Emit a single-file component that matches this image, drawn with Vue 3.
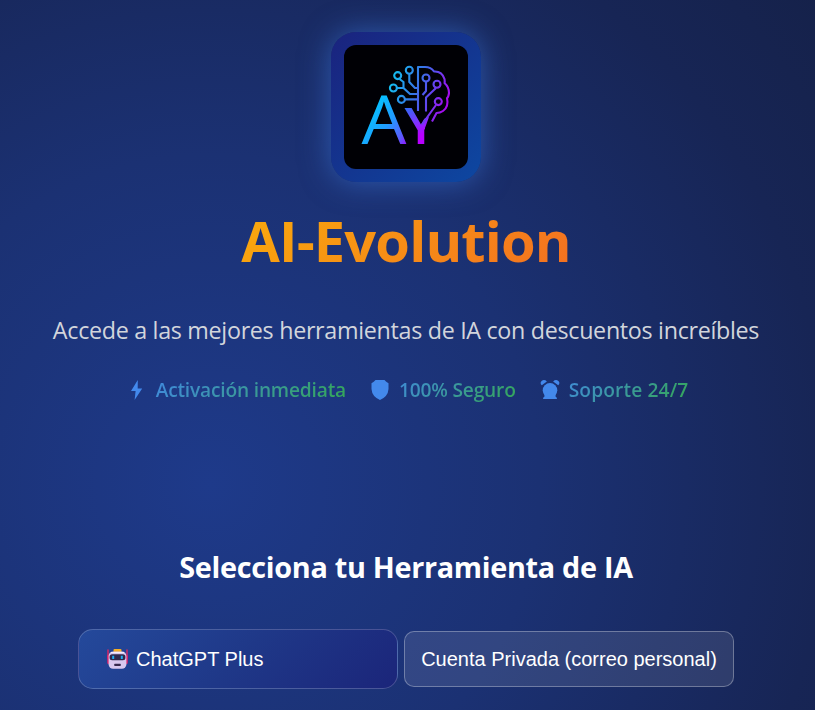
<script setup>
const features = [
  { icon: 'bolt', label: 'Activación inmediata' },
  { icon: 'shield', label: '100% Seguro' },
  { icon: 'clock', label: 'Soporte 24/7' },
]
const nodes = [
  [397.7, 75.6], [409.3, 70.3], [393.4, 88], [401.4, 99.4], [426, 78], [437, 84.2], [438.3, 101.6],
]
</script>

<template>
  <main class="page">
    <header class="hero">
      <div class="logo">
        <svg class="logo-mark" viewBox="344 45 124.5 124.5" aria-label="AY">
          <defs>
            <linearGradient id="letterA" gradientUnits="userSpaceOnUse" x1="366" y1="110" x2="408" y2="140">
              <stop offset="0" stop-color="#00c8ff" />
              <stop offset="0.5" stop-color="#209cff" />
              <stop offset="0.85" stop-color="#5a5cff" />
              <stop offset="1" stop-color="#8a22ff" />
            </linearGradient>
            <linearGradient id="letterY" gradientUnits="userSpaceOnUse" x1="406" y1="106" x2="421" y2="135">
              <stop offset="0" stop-color="#2a70f5" />
              <stop offset="0.55" stop-color="#7838ff" />
              <stop offset="1" stop-color="#b800ff" />
            </linearGradient>
            <linearGradient id="brain" gradientUnits="userSpaceOnUse" x1="390" y1="80" x2="448" y2="100">
              <stop offset="0" stop-color="#12c2f0" />
              <stop offset="0.42" stop-color="#3478e8" />
              <stop offset="0.66" stop-color="#5a4cf0" />
              <stop offset="1" stop-color="#a808ee" />
            </linearGradient>
            <clipPath id="stem"><path d="M400 100H414L420 120L429 117L425 128V148H400Z" /></clipPath>
          </defs>
          <text class="mark-text a" x="361.4" y="143.8" textLength="45" lengthAdjust="spacingAndGlyphs" fill="url(#letterA)">A</text>
          <text class="mark-text y" x="404.5" y="143.8" textLength="33" lengthAdjust="spacingAndGlyphs" fill="url(#letterY)" clip-path="url(#stem)">Y</text>
          <g fill="none" stroke="url(#brain)" stroke-width="2.100" stroke-linejoin="round">
            <circle v-for="(n, i) in nodes" :key="i" :cx="n[0]" :cy="n[1]" r="3.5" />
            <path d="M418 111V67H425Q431 67 434 71.500Q442 71 444.500 79Q445 82 444.500 83Q449 87 449 93Q448.500 97 447 98Q449 107 443 111Q440 113 436.500 113L432 121.500" />
            <path d="M399.500 79L403.500 82V88L410 94H418M397 88H404M409.300 74V82L415 88H418M405 99.400H418M426 82V91L422.500 95M436 88L426 97.500V111.500M436 105L422 124.500" />
          </g>
        </svg>
      </div>
      <h1 class="title">AI-Evolution</h1>
      <p class="subtitle">Accede a las mejores herramientas de IA con descuentos increíbles</p>
      <ul class="features">
        <li v-for="f in features" :key="f.icon" class="feature" :class="f.icon">
          <svg class="feature-icon" viewBox="0 0 20 22">
            <path v-if="f.icon === 'bolt'" d="M10.800 1L4 12H8.600L7.600 21L15.200 9.500H10.700Z" />
            <path v-else-if="f.icon === 'shield'" d="M5.500 1H14.500Q16 3 18.500 4.300V10Q18 17.500 10 21Q2 17.500 1.500 10V4.300Q4 3 5.500 1Z" />
            <g v-else>
              <circle cx="10" cy="11.300" r="7.300" />
              <path d="M4.500 15H15.500V17.500Q17 18 17 20H3Q3 18 4.500 17.500Z" />
              <path d="M1.800 6.200Q-.5 4 1.600 1.900Q4.300 -.2 6.900 2.400ZM18.200 6.200Q20.500 4 18.400 1.900Q15.700 -.2 13.100 2.400Z" />
            </g>
          </svg>
          <span>{{ f.label }}</span>
        </li>
      </ul>
    </header>
    <section class="picker">
      <h2 class="heading">Selecciona tu Herramienta de IA</h2>
      <div class="options">
        <button class="tool" type="button">
          <svg class="robot" viewBox="0 0 21 20">
            <path d="M1 1V9M20 1V9" stroke="#ed2460" stroke-width="1.300" stroke-linecap="round" />
            <rect x=".2" y="6" width="3" height="9" rx="1.300" fill="#dc246c" />
            <rect x="17.800" y="6" width="3" height="9" rx="1.300" fill="#dc246c" />
            <rect x="6.500" width="8" height="4" rx="1" fill="#f5ae25" />
            <rect x="1.600" y="2.500" width="17.800" height="17.200" rx="4.500" fill="#d9c8ef" />
            <path d="M4 3.500H17" stroke="#f4edfc" />
            <rect x="2.600" y="5.300" width="15.800" height="6" rx="2.500" fill="#30284b" />
            <path d="M6.200 6.700V10M14.800 6.700V10" stroke="#20acee" stroke-width="2" />
            <rect x="7.300" y="14.700" width="6.400" height="2.200" rx=".5" fill="#38294e" />
          </svg>
          <span>ChatGPT Plus</span>
        </button>
        <button class="plan" type="button">Cuenta Privada (correo personal)</button>
      </div>
    </section>
  </main>
</template>

<style>
body {
  background: #172554;
}
</style>

<style scoped>
.page {
  box-sizing: border-box;
  min-height: 710px;
  padding: 32px 3px 21px 0;
  overflow: hidden;
  color: #fff;
  font-family: "Segoe UI", "Open Sans", sans-serif;
  background: radial-gradient(circle at 210px 485px, #1e3a8a 0, #1b3173 330px, #172555 620px, #152149 800px);
}
.hero {
  display: flex;
  flex-direction: column;
  align-items: center;
}
.logo {
  box-sizing: border-box;
  width: 150px;
  height: 150px;
  padding: 12.75px;
  border-radius: 25px;
  background: linear-gradient(135deg, #1a237e, #0d47a1);
  box-shadow: 0 0 30px rgba(66, 133, 244, 0.5);
}
.logo-mark {
  display: block;
  width: 124.5px;
  height: 124.5px;
  border-radius: 12px;
  background: #000005;
}
.mark-text {
  font-family: "Open Sans", sans-serif;
}
.a {
  font-size: 67px;
  font-weight: 500;
}
.y {
  font-size: 51px;
  font-weight: 600;
}
.title {
  margin: 20px 0 0;
  font-size: 56px;
  line-height: 76px;
  font-weight: 700;
  letter-spacing: -0.85px;
  color: transparent;
  background: linear-gradient(135deg, #f9ab0c, #f36f21);
  background-clip: text;
}
.subtitle {
  margin: 36px 0 0;
  font-size: 23.3px;
  line-height: 32px;
  letter-spacing: -0.31px;
  white-space: nowrap;
  color: #d2d5dc;
}
.features {
  display: flex;
  gap: 24px;
  margin: 28px 0 0;
  padding: 0 0 0 3px;
  list-style: none;
}
.feature {
  display: flex;
  align-items: center;
  gap: 9px;
  font-size: 19.2px;
  line-height: 32px;
  font-weight: 600;
  letter-spacing: -0.2px;
  white-space: nowrap;
  color: transparent;
  background: linear-gradient(135deg, #4285f4, #34a853);
  background-clip: text;
}
.feature.clock {
  letter-spacing: 0.12px;
}
.feature-icon {
  width: 20px;
  height: 22px;
  fill: #4389ec;
}
.picker {
  display: flex;
  flex-direction: column;
  align-items: center;
  margin-top: 141px;
}
.heading {
  margin: 0;
  font-size: 28.8px;
  line-height: 40px;
  font-weight: 700;
  letter-spacing: -0.3px;
}
.options {
  display: flex;
  align-items: center;
  gap: 6px;
  margin-top: 42px;
}
.tool,
.plan {
  box-sizing: border-box;
  margin: 0;
  font: 20px "Liberation Sans", Arial, sans-serif;
  color: #fff;
  white-space: nowrap;
}
.tool {
  display: flex;
  align-items: center;
  gap: 8px;
  width: 320px;
  height: 60px;
  padding: 0 28px;
  border: 1px solid rgba(255, 255, 255, 0.2);
  border-radius: 15px;
  background: linear-gradient(135deg, #24499b, #1f3888 50%, #1b257a);
}
.robot {
  width: 21px;
  height: 20px;
}
.plan {
  width: 330px;
  height: 56px;
  padding: 0;
  border: 1px solid rgba(255, 255, 255, 0.3);
  border-radius: 10px;
  background: rgba(255, 255, 255, 0.1);
}
</style>
